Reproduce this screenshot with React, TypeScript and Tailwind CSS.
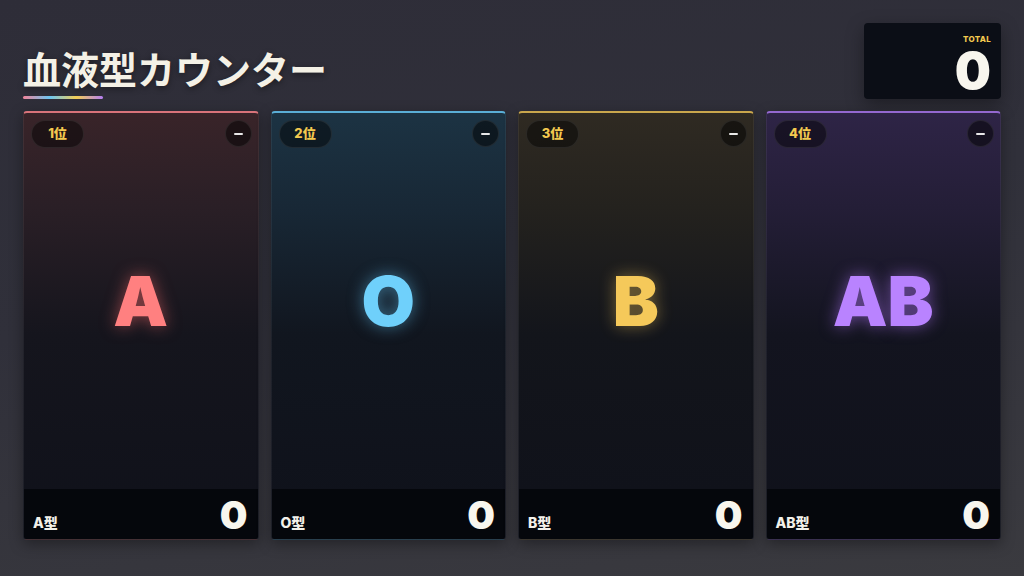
import React from "react";

type Card = {
  rank: string;
  letter: string;
  label: string;
  color: string;
  topBorder: string;
  bg: string;
  glow: string;
};

const cards: Card[] = [
  {
    rank: "1位",
    letter: "A",
    label: "A型",
    color: "text-[#ff8080]",
    topBorder: "border-t-[#d9737a]",
    bg: "bg-[linear-gradient(180deg,#392429_0%,#2a1f26_22%,#15151d_52%,#0f111a_100%)]",
    glow: "[text-shadow:0_0_16px_rgba(255,110,110,0.5)]",
  },
  {
    rank: "2位",
    letter: "O",
    label: "O型",
    color: "text-[#6fd0fb]",
    topBorder: "border-t-[#5aaed6]",
    bg: "bg-[linear-gradient(180deg,#1c3343_0%,#182836_22%,#11161f_52%,#0f111a_100%)]",
    glow: "[text-shadow:0_0_16px_rgba(100,200,250,0.5)]",
  },
  {
    rank: "3位",
    letter: "B",
    label: "B型",
    color: "text-[#f5c95a]",
    topBorder: "border-t-[#c9a64c]",
    bg: "bg-[linear-gradient(180deg,#2f2a22_0%,#24221e_22%,#13151b_52%,#0f111a_100%)]",
    glow: "[text-shadow:0_0_16px_rgba(245,200,90,0.45)]",
  },
  {
    rank: "4位",
    letter: "AB",
    label: "AB型",
    color: "text-[#b983ff]",
    topBorder: "border-t-[#9468d0]",
    bg: "bg-[linear-gradient(180deg,#2e2446_0%,#241e37_22%,#13141f_52%,#0f111a_100%)]",
    glow: "[text-shadow:0_0_16px_rgba(180,120,255,0.55)]",
  },
];

function BloodCard({ c }: { c: Card }) {
  return (
    <div
      className={`relative flex flex-col overflow-hidden rounded-[4px] border border-white/[0.06] border-t-2 ${c.topBorder} ${c.bg} shadow-[0_4px_14px_rgba(0,0,0,0.35)]`}
    >
      <div className="absolute left-[7px] top-[7px] flex h-[28px] w-[53px] items-center justify-center rounded-full border border-white/[0.08] bg-black/45 text-[13px] font-extrabold text-[#f3c94f] [font-family:Inter,'Noto_Sans_CJK_JP',sans-serif]">
        {c.rank}
      </div>
      <div className="absolute right-[6px] top-[7px] flex h-[27px] w-[27px] items-center justify-center rounded-full border border-white/[0.08] bg-black/50">
        <div className="h-[2px] w-[9px] rounded bg-white/90" />
      </div>
      <div className="flex flex-1 items-center justify-center">
        <span
          className={`text-[69px] font-black leading-none ${c.color} ${c.glow} [font-family:Inter,sans-serif]`}
        >
          {c.letter}
        </span>
      </div>
      <div className="flex h-[50px] items-end justify-between bg-[#05070c] pb-[8px] pl-[9px] pr-[10px]">
        <span className="mb-[1px] text-[14px] font-extrabold leading-none text-[#f3f1ea] [font-family:Inter,'Noto_Sans_CJK_JP',sans-serif]">
          {c.label}
        </span>
        <span className="text-[39px] font-black leading-[32px] text-[#f8f6ee] [font-family:Inter,sans-serif]">
          0
        </span>
      </div>
    </div>
  );
}

export default function App() {
  return (
    <div className="flex h-[576px] w-[1024px] flex-col overflow-hidden bg-[linear-gradient(170deg,#2e2d38_0%,#30303a_45%,#3a3a3f_100%)] px-[23px] pt-[23px] pb-[36px]">
      <div className="flex items-end justify-between">
        <div className="flex flex-col">
          <h1 className="text-[38px] font-bold leading-none text-[#f4f1e6] [font-family:'Noto_Sans_CJK_JP',sans-serif] [text-shadow:0_2px_6px_rgba(0,0,0,0.4)]">
            血液型カウンター
          </h1>
          <div className="mt-[9px] h-[3px] w-[80px] rounded-full bg-[linear-gradient(90deg,#f0849a,#6cc6f2,#f3cd55,#b47ef2)]" />
        </div>
        <div className="flex h-[76px] w-[137px] flex-col items-end rounded-[4px] bg-[#0b0e16] pr-[10px] pt-[12px] shadow-[0_6px_18px_rgba(0,0,0,0.35)]">
          <span className="text-[8px] font-extrabold leading-none tracking-[0.3px] text-[#f3c94f] [font-family:Inter,sans-serif]">
            TOTAL
          </span>
          <span className="mt-[9px] text-[51px] font-black leading-[38px] text-[#f8f6ee] [font-family:Inter,sans-serif]">
            0
          </span>
        </div>
      </div>
      <div className="mt-[12px] grid flex-1 grid-cols-4 gap-[12px]">
        {cards.map((c) => (
          <BloodCard key={c.letter} c={c} />
        ))}
      </div>
    </div>
  );
}
